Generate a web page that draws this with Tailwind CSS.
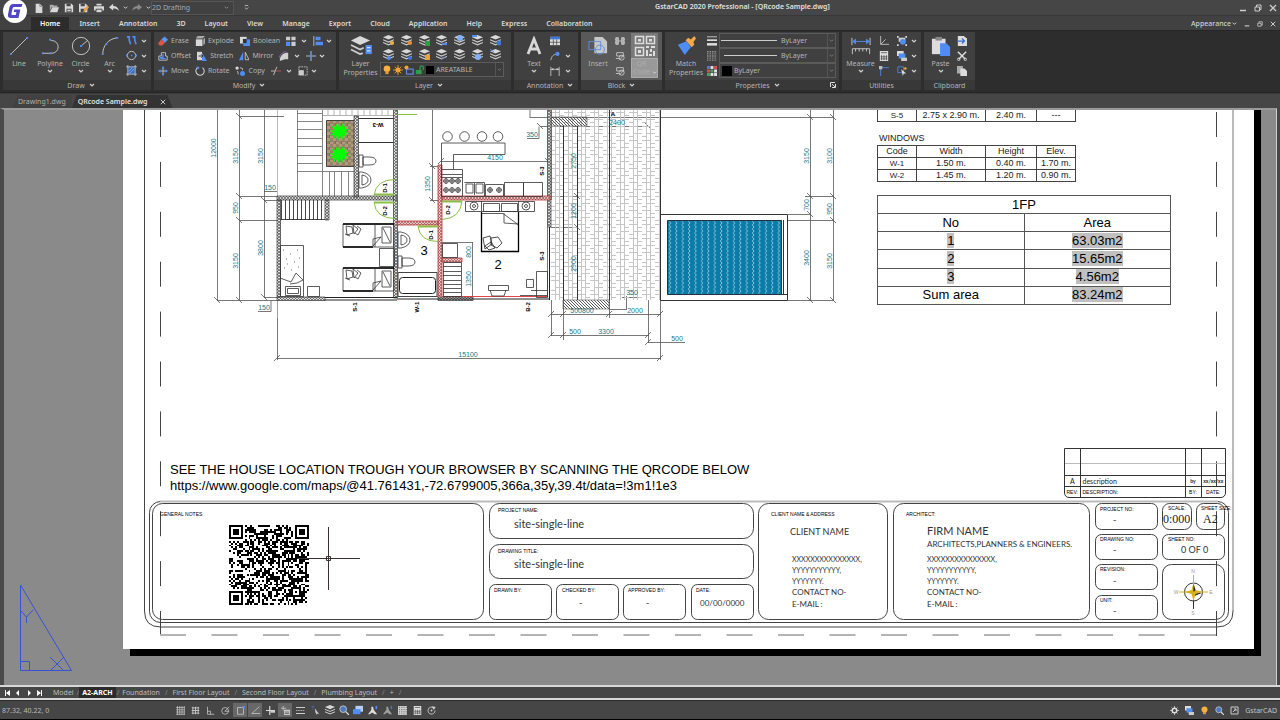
<!DOCTYPE html>
<html lang="en">
<head>
    <meta charset="UTF-8">
    <meta name="viewport" content="width=device-width, initial-scale=1.0">
    <title>GstarCAD 2020 Professional - [QRcode Sample.dwg]</title>
    <script src="https://cdn.jsdelivr.net/npm/@tailwindcss/browser@4"></script>
</head>
<body class="flex h-screen flex-col overflow-hidden bg-[#464646] font-['Noto_Sans',sans-serif] text-[7px] leading-[9px] text-[#c4c4c4]">

    <!-- Icon set -->
    <svg class="hidden">
        <symbol id="chev" viewBox="0 0 6 6"><path d="M1 2l2 2 2-2" fill="none" stroke="#d0d0d0" stroke-width="1.2"/></symbol>
        <symbol id="new" viewBox="0 0 12 12"><path d="M2 1h5l3 3v8H2z" fill="#d8d8d8"/><path d="M7 1v3h3" fill="none" stroke="#777"/></symbol>
        <symbol id="open" viewBox="0 0 12 12"><path d="M1 2h4l1 1h4v2H3l-2 5z" fill="#aaa"/><path d="M4 5h8l-2 6H1z" fill="#d8d8d8"/></symbol>
        <symbol id="save" viewBox="0 0 12 12"><path d="M1 1h8l2 2v8H1z" fill="#d8d8d8"/><path d="M3 1h5v3H3zM3 7h6v4H3z" fill="#464646"/><path d="M4 8h4v2H4z" fill="#d8d8d8"/></symbol>
        <symbol id="saveas" viewBox="0 0 12 12"><path d="M0 1h8l2 2v8H0z" fill="#d8d8d8"/><path d="M2 1h5v3H2zM2 7h5v4H2z" fill="#464646"/><path d="M5 11l1-3.500L10 3l2 2-4 5z" fill="#f0a040"/></symbol>
        <symbol id="print" viewBox="0 0 12 12"><path d="M3 1h6v2H3zM0 4h12v5h-2V7H2v2H0z" fill="#d8d8d8"/><path d="M3 8h6v3H3z" fill="#d8d8d8"/></symbol>
        <symbol id="undo" viewBox="0 0 12 12"><path d="M0 5l5-4v2.500c4 0 6 2 7 6-2-2.500-4-3-7-3V9z" fill="#d8d8d8"/></symbol>
        <symbol id="redo" viewBox="0 0 12 12"><path d="M12 5L7 1v2.500c-4 0-6 2-7 6 2-2.500 4-3 7-3V9z" fill="#8a8a8a"/></symbol>
        <symbol id="more" viewBox="0 0 6 6"><path d="M1 .5h4M1 3l2 2 2-2" fill="none" stroke="#d0d0d0"/></symbol>
        <symbol id="min" viewBox="0 0 8 8"><path d="M1 6.500h6" stroke="#ccc" stroke-width="1.500"/></symbol>
        <symbol id="restore" viewBox="0 0 8 8"><path d="M1 3h4.500v4H1zM2.500 3V1H7v4.500H5.500" fill="none" stroke="#ccc"/></symbol>
        <symbol id="close" viewBox="0 0 8 8"><path d="M1 1l6 6M7 1L1 7" stroke="#ccc" stroke-width="1.300"/></symbol>

        <symbol id="line" viewBox="0 0 22 22"><path d="M2 20L20 2" stroke="#ccc"/><path d="M1 19h2v2H1zM19 1h2v2h-2z" fill="#4d8df5"/></symbol>
        <symbol id="polyline" viewBox="0 0 22 22"><path d="M3 19h10a7 7 0 0 0 0-14l-2-1" fill="none" stroke="#ccc"/><path d="M2 18h2v2H2zM11 18h2v2h-2zM10 3h2v2h-2z" fill="#4d8df5"/></symbol>
        <symbol id="circle" viewBox="0 0 22 22"><circle cx="11" cy="11" r="9.500" fill="none" stroke="#ccc"/><path d="M11 11l7-6" stroke="#ccc"/><path d="M10 10h2v2h-2z" fill="#4d8df5"/></symbol>
        <symbol id="arc" viewBox="0 0 22 22"><path d="M3 20C3 11 9 3 19 2" fill="none" stroke="#ccc"/><path d="M2 19h2v2H2zM6 8h2v2H6zM18 1h2v2h-2z" fill="#4d8df5"/></symbol>
        <symbol id="spline" viewBox="0 0 12 12"><path d="M1 2h2.500v3.500L5 10M7 2h2.500v3.500L11 10" fill="none" stroke="#4d8df5" stroke-width="1.800"/></symbol>
        <symbol id="ellipse" viewBox="0 0 12 12"><circle cx="6" cy="6" r="4.500" fill="none" stroke="#ccc"/><path d="M5.300 5.300h1.500v1.500H5.300zM0 5h2v2H0zM10 5h2v2h-2z" fill="#4d8df5"/></symbol>
        <symbol id="hatch" viewBox="0 0 12 12"><path d="M2 2h8v8H2z" fill="#3a6fc0"/><path d="M2 0v12M10 0v12M0 2h12M0 10h12" stroke="#bbb"/><path d="M3 7l4-4M4 9l5-5" stroke="#9cc0f5" stroke-width=".7"/></symbol>

        <symbol id="erase" viewBox="0 0 12 12"><path d="M4 4l4-3.500 4 4-4 4z" fill="#5b96f2"/><path d="M4 4l4 4.500-3 3H2L0 9z" fill="#e05545"/></symbol>
        <symbol id="explode" viewBox="0 0 12 12"><path d="M1 4h8v8H1z" fill="#d8d8d8"/><path d="M1 3l2-3h9L9 3zM10 4l2-2v7l-2 2z" fill="#aaa"/></symbol>
        <symbol id="boolean" viewBox="0 0 12 12"><path d="M0 1h8v8H0z" fill="#d8d8d8"/><path d="M4 4h8v8H4z" fill="#4d8df5"/><path d="M3.500 3.500h4.500v5H3.500z" fill="#333"/></symbol>
        <symbol id="array" viewBox="0 0 12 12"><path d="M0 1h5v4H0zM6.500 1h5v4h-5zM6.500 7h5v5h-5z" fill="#ccc"/><path d="M0 7h5v5H0z" fill="#4d8df5"/></symbol>
        <symbol id="align" viewBox="0 0 12 12"><path d="M1 0v12" stroke="#ccc"/><path d="M3 1h6v4H3zM3 7h9v4H3z" fill="#4d8df5"/></symbol>
        <symbol id="offset" viewBox="0 0 12 12"><path d="M1 11V6h3V2h5v4h2v5z" fill="none" stroke="#ccc"/><path d="M3 9V7.500h3V4.500h1M3 9h6" fill="none" stroke="#4d8df5" stroke-width="1.500"/></symbol>
        <symbol id="stretch" viewBox="0 0 12 12"><path d="M0 1h6v10H0z" fill="#d8d8d8"/><path d="M6 2l6 10H6z" fill="#4d8df5"/><path d="M2 6h5M5 4l2 2-2 2" stroke="#222" fill="none"/></symbol>
        <symbol id="mirror" viewBox="0 0 12 12"><path d="M5 1v10H0z" fill="#4d8df5"/><path d="M7.500 1.500V10.500H12z" fill="none" stroke="#ccc"/></symbol>
        <symbol id="fillet" viewBox="0 0 12 12"><path d="M1 12C1 5 5 2 11 2v8H7z" fill="#d0d0d0"/><path d="M0 9c1-5 4-8 9-8" fill="none" stroke="#a060c0"/></symbol>
        <symbol id="break" viewBox="0 0 12 12"><path d="M0 6h12M6 0v12" stroke="#ccc"/><path d="M6 0v4M6 8v4" stroke="#4d8df5"/><path d="M4.500 4.500h3v3h-3z" fill="#4d8df5"/></symbol>
        <symbol id="move" viewBox="0 0 12 12"><path d="M6 1v10M1 6h10" stroke="#ccc"/><path d="M6 0l2 3H4zM6 12l2-3H4zM0 6l3-2v4zM12 6L9 4v4z" fill="#4d8df5"/></symbol>
        <symbol id="rotate" viewBox="0 0 12 12"><path d="M4 1.500a5 5 0 1 0 5 .5" fill="none" stroke="#ccc" stroke-width="1.300"/><path d="M1 1h4v3z" fill="#4d8df5"/></symbol>
        <symbol id="copy" viewBox="0 0 12 12"><circle cx="2.500" cy="2.500" r="2" fill="#d8d8d8"/><circle cx="9" cy="9" r="3" fill="#4d8df5"/><path d="M6 2l3 1v2M3 6l1 4" stroke="#ccc" fill="none"/></symbol>
        <symbol id="trim" viewBox="0 0 12 12"><path d="M0 6h5M3 11L7 1" stroke="#ccc"/><path d="M6 6h6" stroke="#d05050"/></symbol>
        <symbol id="scale" viewBox="0 0 12 12"><path d="M1 1h10v10H1z" fill="none" stroke="#ccc" stroke-dasharray="2 1"/><path d="M1 5h6v6H1z" fill="#ccc"/></symbol>

        <symbol id="layers" viewBox="0 0 12 12"><path d="M6 0l6 2.500L6 5 0 2.500z" fill="#d8d8d8"/><path d="M0 5.200l6 2.500 6-2.500M0 8.200l6 2.500 6-2.500" fill="none" stroke="#ccc" stroke-width="1.200"/></symbol>
        <symbol id="layerprops" viewBox="0 0 24 22"><path d="M11 1l11 5-11 5L1 6z" fill="#d8d8d8"/><path d="M1 11l10 5 4-2M1 16l10 5 3-1" fill="none" stroke="#ccc" stroke-width="2"/><path d="M17 11h7v10h-7z" fill="#4d8df5"/><path d="M18.500 14h4M18.500 17.500h4" stroke="#fff"/></symbol>
        <symbol id="bulb" viewBox="0 0 12 12"><circle cx="6" cy="4.500" r="4" fill="#f5b040"/><path d="M4 8h4v3H4z" fill="#e09a30"/></symbol>
        <symbol id="sun" viewBox="0 0 12 12"><circle cx="6" cy="6" r="3" fill="#f5a030"/><path d="M6 0v12M0 6h12M2 2l8 8M10 2l-8 8" stroke="#f5a030"/></symbol>
        <symbol id="vpfreeze" viewBox="0 0 12 12"><path d="M3 5h8v6H3z" fill="none" stroke="#5a85e0" stroke-width="1.500"/><circle cx="3" cy="3" r="2.500" fill="#f5a030"/></symbol>
        <symbol id="lock" viewBox="0 0 12 12"><path d="M1 6h7v5H1z" fill="#2aa045"/><path d="M6 6V3a2 2 0 0 1 4 0v3" fill="none" stroke="#2aa045" stroke-width="1.500"/></symbol>

        <symbol id="tablei" viewBox="0 0 12 12"><path d="M0 1h12v10H0z" fill="#ddd"/><path d="M0 1h12v3H0z" fill="#3a78e0"/><path d="M4 4v7M8 4v7M0 7.500h12" stroke="#555"/></symbol>
        <symbol id="leader" viewBox="0 0 12 12"><path d="M1 11C2 6 4 4 8 4" fill="none" stroke="#ccc"/><circle cx="9" cy="3.500" r="2.500" fill="#4d8df5"/></symbol>
        <symbol id="dim" viewBox="0 0 12 12"><path d="M1 1v11M11 1v11M1 4h10" stroke="#ccc" fill="none"/><path d="M1 4l3-1.500v3zM11 4L8 2.500v3z" fill="#ccc"/></symbol>
        <symbol id="insert" viewBox="0 0 22 22"><path d="M7 1h9l5 5v13H7z" fill="#c8c8c8"/><path d="M1 6h13v9H1z" fill="none" stroke="#5b8ee0"/><circle cx="13" cy="15" r="5" fill="none" stroke="#5b8ee0"/></symbol>
        <symbol id="attr" viewBox="0 0 12 12"><path d="M1 2h3v8H1zM8 2h3v8H8zM4 6h4M0 4h1M0 8h1M11 4h1M11 8h1" fill="#aaa" stroke="#ccc"/></symbol>
        <symbol id="bedit" viewBox="0 0 12 12"><path d="M2 2h8v4H2zM5 9H1" fill="none" stroke="#ccc"/><circle cx="8" cy="8" r="3" fill="none" stroke="#ccc"/><path d="M5 11l6-6" stroke="#ccc"/></symbol>
        <symbol id="qr" viewBox="0 0 22 22"><path d="M1.500 1.500h8v7h-8zM12.500 1.500h8v7h-8zM1.500 12.500h8v8h-8z" fill="none" stroke="#ddd" stroke-width="1.500"/><path d="M4 4h3v2.500H4zM15 4h3v2.500h-3zM4 15h3v3H4zM12 11h3v2h-3zM17 11h4v2h-4zM12 15h2v6h-2zM16 14h2v3h-2zM19 16h2v5h-2zM15 19h3v2h-3z" fill="#ddd"/></symbol>
        <symbol id="brush" viewBox="0 0 22 22"><path d="M1 10l10-4 5 7-7 9z" fill="#4d8df5"/><path d="M10 5l3-3 3 2 4-4 2 3-3 4 1 3-3 3z" fill="#f2a947"/></symbol>
        <symbol id="lweight" viewBox="0 0 12 12"><path d="M0 1h12" stroke="#ddd"/><path d="M0 5h12" stroke="#ddd" stroke-width="2"/><path d="M0 10h12" stroke="#ddd" stroke-width="3"/></symbol>
        <symbol id="ltype" viewBox="0 0 12 12"><path d="M0 1h12M0 6h12" stroke="#ccc" stroke-dasharray="2 1"/><path d="M0 3.500h12M0 8.500h12M0 11h12" stroke="#ccc" stroke-dasharray="1 1"/></symbol>
        <symbol id="colors" viewBox="0 0 12 12"><path d="M0 0h3.500v3.500H0z" fill="#4a7fd0"/><path d="M4.200 0h3.500v3.500H4.200zM8.500 8.500H12V12H8.500z" fill="#ddd"/><path d="M8.500 0H12v3.500H8.500zM0 4.200h3.500v3.500H0z" fill="#d05050"/><path d="M4.200 4.200h3.500v3.500H4.200zM0 8.500h3.500V12H0z" fill="#50a060"/><path d="M8.500 4.200H12v3.500H8.500zM4.200 8.500h3.500V12H4.200z" fill="#e0e0e0"/></symbol>
        <symbol id="measure" viewBox="0 0 22 22"><path d="M1 2v8M21 2v8" stroke="#ccc"/><path d="M2 6h18M2 6l3-2.500v5zM20 6l-3-2.500v5z" stroke="#4d8df5" fill="#4d8df5"/><path d="M1.500 20v-6h19v6M5 14v3M9 14v3M13 14v3M17 14v3" fill="none" stroke="#ccc"/></symbol>
        <symbol id="ucs" viewBox="0 0 12 12"><path d="M2 0v10h10M2 10l6-6" stroke="#ccc" fill="none"/></symbol>
        <symbol id="calc" viewBox="0 0 12 12"><path d="M1 0h10v12H1z" fill="#ddd"/><path d="M2.500 2h7M3 5v6M6 5v6M9 5v6M2 7h8M2 9.500h8" stroke="#555"/></symbol>
        <symbol id="point" viewBox="0 0 12 12"><path d="M2 12V2h10" stroke="#4d8df5" fill="none"/><path d="M0 0h4v4H0z" fill="#bbb"/></symbol>
        <symbol id="group" viewBox="0 0 12 12"><path d="M2 2h8v5H2z" fill="#ccc"/><circle cx="7" cy="7" r="3.500" fill="#4d8df5"/><path d="M0 0h2v2H0zM10 0h2v2h-2zM0 10h2v2H0zM10 10h2v2h-2z" fill="#ddd"/></symbol>
        <symbol id="order" viewBox="0 0 12 12"><path d="M0 0h8v6H0z" fill="#ddd"/><path d="M2 3h8v6H2z" fill="#4d8df5"/><path d="M5 8h7v4H5z" fill="#ccc"/></symbol>
        <symbol id="qselect" viewBox="0 0 12 12"><path d="M1 1h7v7H1z" fill="none" stroke="#4d8df5"/><path d="M5 4l6 5H8l-1 3z" fill="#ddd"/><circle cx="10" cy="3" r="1.500" fill="#f2a947"/></symbol>
        <symbol id="paste" viewBox="0 0 22 22"><path d="M1 3h15v17H1z" fill="#ddd"/><path d="M5 1h7v4H5z" fill="#888"/><path d="M10 8h7l4 4v10H10z" fill="#4d8df5"/></symbol>
        <symbol id="link" viewBox="0 0 12 12"><path d="M1 0h7l4 3v9H1z" fill="#ddd"/><path d="M0 6h9M6 3l3 3-3 3" stroke="#2f6fe0" stroke-width="1.500" fill="none"/></symbol>
        <symbol id="cut" viewBox="0 0 12 12"><path d="M1 1l9 9M11 1l-9 9" stroke="#ddd" stroke-width="1.800"/><circle cx="2" cy="10" r="1.500" fill="none" stroke="#ddd"/><circle cx="10" cy="10" r="1.500" fill="none" stroke="#ddd"/></symbol>
        <symbol id="copyclip" viewBox="0 0 12 12"><path d="M0 0h7v9H0z" fill="#aaa"/><path d="M4 3h5l3 3v6H4z" fill="#ddd"/></symbol>

        <symbol id="grid" viewBox="0 0 12 12"><path d="M2 0v12M5 0v12M8 0v12M11 0v12M0 2h12M0 5h12M0 8h12M0 11h12" stroke="#ccc" stroke-width=".9"/></symbol>
        <symbol id="snap" viewBox="0 0 12 12"><path d="M2.500 1v10M6 1v10M9.500 1v10M1 2.500h10M1 6h10M1 9.500h10" stroke="#ccc" stroke-width="1.200"/></symbol>
        <symbol id="ortho" viewBox="0 0 12 12"><path d="M2 1v10h9M2 7h4v4" fill="none" stroke="#ccc"/></symbol>
        <symbol id="polar" viewBox="0 0 12 12"><circle cx="5.500" cy="6.500" r="4.500" fill="none" stroke="#ccc"/><path d="M5 7h6M5 7l6-6" stroke="#ccc"/></symbol>
        <symbol id="osnap" viewBox="0 0 12 12"><path d="M2 2h8v9H2z" fill="none" stroke="#ccc"/><path d="M9 0h3v3H9z" fill="#4d8df5"/></symbol>
        <symbol id="otrack" viewBox="0 0 12 12"><path d="M11 1L1 10h11" fill="none" stroke="#ccc"/></symbol>
        <symbol id="dyn" viewBox="0 0 12 12"><path d="M5 0v12M0 6h12" stroke="#ddd" stroke-width="1.500"/><path d="M6 6h6v3H6z" fill="#ccc"/></symbol>
        <symbol id="dyninput" viewBox="0 0 12 12"><path d="M3 0v6M0 3h7" stroke="#ccc"/><path d="M4 5h8v7H4z" fill="#ccc"/><path d="M5 8h6M5 10h6" stroke="#555"/></symbol>
        <symbol id="lwt" viewBox="0 0 12 12"><path d="M0 2h12M0 10h12" stroke="#ccc" stroke-width="1.500"/><path d="M0 6h12" stroke="#ccc" stroke-dasharray="2 1"/></symbol>
        <symbol id="cursor" viewBox="0 0 12 12"><path d="M5 3l6 8-3-1 0 2-2-3z" fill="#ccc"/><path d="M1 1h3M2 4h1" stroke="#4d8df5"/></symbol>
        <symbol id="zoomi" viewBox="0 0 12 12"><circle cx="5" cy="5" r="4" fill="#4d78c0" stroke="#ccc"/><path d="M8 8l4 4" stroke="#ddd" stroke-width="1.500"/></symbol>
        <symbol id="viewport" viewBox="0 0 12 12"><path d="M3 1h9v7H3z" fill="#b8cdf0"/><path d="M0 5h9v6H0z" fill="#4d8df5"/></symbol>
        <symbol id="annoscale" viewBox="0 0 12 12"><path d="M4 2h2l1 4 4 5H8L5 9l-3 2H0l4-5z" fill="#ddd"/><path d="M9 1h2v4H9z" fill="#4d8df5"/></symbol>
        <symbol id="checker" viewBox="0 0 12 12"><path d="M0 0h12v12H0z" fill="#ccc"/><path d="M2 1v10M5 1v10M8 1v10M11 1v10" stroke="#555" stroke-dasharray="1.500 1.500"/></symbol>
        <symbol id="cycle" viewBox="0 0 12 12"><path d="M9 2.500A4.700 4.700 0 1 0 10.700 6" fill="none" stroke="#ccc" stroke-width="1.200"/><path d="M4.500 6h3M6 4.500v3M7 1l4 .5-2 3z" stroke="#ccc" fill="#ccc"/></symbol>
        <symbol id="gear" viewBox="0 0 12 12"><circle cx="6" cy="6" r="3" fill="none" stroke="#ddd" stroke-width="2"/><path d="M6 0v3M6 9v3M0 6h3M9 6h3M2 2l2 2M8 8l2 2M10 2L8 4M4 8l-2 2" stroke="#ddd"/></symbol>
    </svg>

    <!-- Title bar -->
    <header class="relative flex h-[15px] shrink-0 items-center pr-[3px] pl-[33px]">
        <svg class="absolute -top-[2px] left-[2px] z-10 size-[26px]" viewBox="0 0 26 26" aria-label="GstarCAD">
            <circle cx="13" cy="13" r="12" fill="#fff"/>
            <path d="M20.500 6H11Q8.500 6 7.500 9L6 16.500q-.6 3.500 3 3.500h7.500l1.800-8.500h-6l-.6 2.500h2.700l-.6 3h-3.600q-1 0-.8-1l1.300-6q.3-1 1.300-1h7.500z" fill="#5046c8"/>
        </svg>
        <div class="flex items-center gap-[3px]">
            <button aria-label="New" class="grid w-3 place-items-center"><svg class="size-[10px]"><use href="#new"/></svg></button>
            <button aria-label="Open" class="grid w-3 place-items-center"><svg class="size-[10px]"><use href="#open"/></svg></button>
            <button aria-label="Save" class="grid w-3 place-items-center"><svg class="size-[10px]"><use href="#save"/></svg></button>
            <button aria-label="Save as" class="grid w-3 place-items-center"><svg class="size-[10px]"><use href="#saveas"/></svg></button>
            <button aria-label="Print" class="grid w-3 place-items-center"><svg class="size-[10px]"><use href="#print"/></svg></button>
            <button aria-label="Undo" class="grid w-3 place-items-center"><svg class="size-[10px]"><use href="#undo"/></svg></button>
            <svg class="size-[5px]"><use href="#chev"/></svg>
            <button aria-label="Redo" class="grid w-3 place-items-center"><svg class="size-[10px]"><use href="#redo"/></svg></button>
            <svg class="size-[5px]"><use href="#chev"/></svg>
        </div>
        <label class="flex h-[14px] w-[83px] items-center justify-between border border-[#555] bg-[#414141] pr-1">
            <select aria-label="Workspace" class="appearance-none text-[#a8a8a8]"><option>2D Drafting</option></select>
            <svg class="size-[5px] opacity-50"><use href="#chev"/></svg>
        </label>
        <svg class="ml-[10px] size-[5px]"><use href="#more"/></svg>
        <h1 class="pointer-events-none absolute left-[58%] top-[2px] -translate-x-1/2 font-semibold whitespace-nowrap text-[#e0e0e0]">GstarCAD 2020 Professional - [QRcode Sample.dwg]</h1>
        <div class="ml-auto flex gap-[7px]">
            <button aria-label="Minimize"><svg class="size-2"><use href="#min"/></svg></button>
            <button aria-label="Restore"><svg class="size-2"><use href="#restore"/></svg></button>
            <button aria-label="Close"><svg class="size-2"><use href="#close"/></svg></button>
        </div>
    </header>

    <!-- Ribbon tabs -->
    <nav class="flex h-[15px] shrink-0 items-end gap-px border-t border-[#383838] bg-[#414141] pr-1 pl-[31px] font-semibold text-[#d8d8d8]">
        <button class="h-[13px] bg-[#2c2c2c] px-[9px] text-white">Home</button>
        <button class="h-[13px] px-[9px]">Insert</button>
        <button class="h-[13px] px-[9px]">Annotation</button>
        <button class="h-[13px] px-[9px]">3D</button>
        <button class="h-[13px] px-[9px]">Layout</button>
        <button class="h-[13px] px-[9px]">View</button>
        <button class="h-[13px] px-[9px]">Manage</button>
        <button class="h-[13px] px-[9px]">Export</button>
        <button class="h-[13px] px-[9px]">Cloud</button>
        <button class="h-[13px] px-[9px]">Application</button>
        <button class="h-[13px] px-[9px]">Help</button>
        <button class="h-[13px] px-[9px]">Express</button>
        <button class="h-[13px] px-[9px]">Collaboration</button>
        <div class="ml-auto flex h-[13px] items-center gap-[7px]">
            <button class="flex items-center gap-px font-medium text-[#d0d0d0]">Appearance<svg class="size-[5px]"><use href="#chev"/></svg></button>
            <button aria-label="Minimize drawing"><svg class="size-[6px]"><use href="#min"/></svg></button>
            <button aria-label="Restore drawing"><svg class="size-[6px]"><use href="#restore"/></svg></button>
            <button aria-label="Close drawing"><svg class="size-[6px]"><use href="#close"/></svg></button>
        </div>
    </nav>

    <!-- Ribbon -->
    <section class="flex h-[63px] shrink-0 gap-[3px] border-y border-[#262626] bg-[#2d2d2d] pt-px pb-[2px] pl-[3px] text-[#b4b4b4]">
        <div class="flex w-[148px] shrink-0 flex-col bg-[#404040]">
            <div class="flex flex-1 pt-px">
                <button class="flex w-[32px] flex-col items-center pt-[3px]"><svg class="size-5"><use href="#line"/></svg><span class="pt-[3px]">Line</span></button>
                <button class="flex w-[30px] flex-col items-center pt-[3px]"><svg class="size-5"><use href="#polyline"/></svg><span class="pt-[3px]">Polyline</span><svg class="size-[6px]"><use href="#chev"/></svg></button>
                <button class="flex w-[31px] flex-col items-center pt-[3px]"><svg class="size-5"><use href="#circle"/></svg><span class="pt-[3px]">Circle</span><svg class="size-[6px]"><use href="#chev"/></svg></button>
                <button class="flex w-[27px] flex-col items-center pt-[3px]"><svg class="size-5"><use href="#arc"/></svg><span class="pt-[3px]">Arc</span><svg class="size-[6px]"><use href="#chev"/></svg></button>
                <div class="flex flex-col pl-[3px]">
                    <button aria-label="Spline" class="flex h-[15px] items-center gap-1"><svg class="size-[11px]"><use href="#spline"/></svg><svg class="size-[6px]"><use href="#chev"/></svg></button>
                    <button aria-label="Ellipse" class="flex h-[15px] items-center gap-1"><svg class="size-[11px]"><use href="#ellipse"/></svg><svg class="size-[6px]"><use href="#chev"/></svg></button>
                    <button aria-label="Hatch" class="flex h-[15px] items-center gap-1"><svg class="size-[11px]"><use href="#hatch"/></svg><svg class="size-[6px]"><use href="#chev"/></svg></button>
                </div>
            </div>
            <div class="flex h-[10px] items-center justify-center gap-1 bg-[#383838] pl-2">Draw<svg class="size-[6px]"><use href="#chev"/></svg></div>
        </div>

        <div class="flex w-[182px] shrink-0 flex-col bg-[#404040]">
            <div class="flex flex-1 flex-col pt-px pl-1">
                <div class="flex h-[15px] items-center gap-[6px]">
                    <button class="flex items-center gap-[3px]"><svg class="size-[10px]"><use href="#erase"/></svg>Erase</button>
                    <button class="flex items-center gap-[3px]"><svg class="size-[10px]"><use href="#explode"/></svg>Explode</button>
                    <button class="flex items-center gap-[3px]"><svg class="size-[10px]"><use href="#boolean"/></svg>Boolean</button>
                    <button aria-label="Array" class="flex items-center gap-[5px]"><svg class="size-[10px]"><use href="#array"/></svg><svg class="size-[6px]"><use href="#chev"/></svg></button>
                    <button aria-label="Align" class="flex items-center gap-[3px]"><svg class="size-[10px]"><use href="#align"/></svg><svg class="size-[6px]"><use href="#chev"/></svg></button>
                </div>
                <div class="flex h-[15px] items-center gap-[6px]">
                    <button class="flex items-center gap-[3px]"><svg class="size-[10px]"><use href="#offset"/></svg>Offset</button>
                    <button class="flex items-center gap-[3px]"><svg class="size-[10px]"><use href="#stretch"/></svg>Stretch</button>
                    <button class="flex items-center gap-[3px]"><svg class="size-[10px]"><use href="#mirror"/></svg>Mirror</button>
                    <button aria-label="Fillet" class="flex items-center gap-[5px]"><svg class="size-[10px]"><use href="#fillet"/></svg><svg class="size-[6px]"><use href="#chev"/></svg></button>
                    <button aria-label="Break" class="flex items-center gap-[3px]"><svg class="size-[10px]"><use href="#break"/></svg><svg class="size-[6px]"><use href="#chev"/></svg></button>
                </div>
                <div class="flex h-[15px] items-center gap-[6px]">
                    <button class="flex items-center gap-[3px]"><svg class="size-[10px]"><use href="#move"/></svg>Move</button>
                    <button class="flex items-center gap-[3px]"><svg class="size-[10px]"><use href="#rotate"/></svg>Rotate</button>
                    <button class="flex items-center gap-[3px]"><svg class="size-[10px]"><use href="#copy"/></svg>Copy</button>
                    <button aria-label="Trim" class="flex items-center gap-[5px]"><svg class="size-[10px]"><use href="#trim"/></svg><svg class="size-[6px]"><use href="#chev"/></svg></button>
                    <button aria-label="Scale" class="flex items-center gap-[3px]"><svg class="size-[10px]"><use href="#scale"/></svg><svg class="size-[6px]"><use href="#chev"/></svg></button>
                </div>
            </div>
            <div class="flex h-[10px] items-center justify-center gap-1 bg-[#383838] pl-2">Modify<svg class="size-[6px]"><use href="#chev"/></svg></div>
        </div>

        <div class="flex w-[172px] shrink-0 flex-col bg-[#404040]">
            <div class="flex flex-1 pt-px">
                <button class="flex w-[41px] flex-col items-center pt-[2px] pl-[2px]"><svg class="h-5 w-[22px]"><use href="#layerprops"/></svg><span class="pt-1">Layer<br>Properties</span></button>
                <div class="flex-1 pr-[7px]">
                    <div class="grid h-[29px] grid-cols-7 place-items-center">
                        <svg class="size-[11px]"><use href="#layers"/><circle cx="9" cy="8" r="2" fill="#f2b040"/></svg>
                        <svg class="size-[11px]"><use href="#layers"/><circle cx="9" cy="8" r="2" fill="#f28a30"/></svg>
                        <svg class="size-[11px]"><use href="#layers"/><path d="M6 6h5v5H6z" fill="#2aa045"/></svg>
                        <svg class="size-[11px]"><use href="#layers"/><path d="M6 9h5" stroke="#4d8df5" stroke-width="2"/></svg>
                        <svg class="size-[11px]"><use href="#layers"/><circle cx="6" cy="3" r="3" fill="#7fb0ff"/></svg>
                        <svg class="size-[11px]"><use href="#layers"/><path d="M0 1h5" stroke="#4d8df5" stroke-width="2"/></svg>
                        <svg class="size-[11px]"><use href="#layers"/><circle cx="9" cy="8" r="2.500" fill="#3a78e0"/></svg>
                        <svg class="size-[11px]"><use href="#layers"/><circle cx="6" cy="9" r="2" fill="#4d8df5"/></svg>
                        <svg class="size-[11px]"><use href="#layers"/><circle cx="9" cy="9" r="2" fill="#3a78e0"/></svg>
                        <svg class="size-[11px]"><use href="#layers"/><path d="M6 6h5v5H6z" fill="#f2a030"/></svg>
                        <svg class="size-[11px]"><use href="#layers"/><path d="M5 9l2 1 3-3" stroke="#6a8ad0" fill="none"/></svg>
                        <svg class="size-[11px]"><use href="#layers"/></svg>
                        <svg class="size-[11px]"><use href="#layers"/><circle cx="6" cy="8" r="3" fill="#7fb0ff"/></svg>
                        <svg class="size-[11px]"><use href="#layers"/><path d="M0 0l4 3" stroke="#4d8df5"/></svg>
                    </div>
                    <label class="flex h-[15px] items-center gap-px border border-[#5c5c5c] bg-[#3c3c3c] pl-px">
                        <svg class="size-[10px]"><use href="#bulb"/></svg>
                        <svg class="size-[10px]"><use href="#sun"/></svg>
                        <svg class="size-[10px]"><use href="#vpfreeze"/></svg>
                        <svg class="size-[10px]"><use href="#lock"/></svg>
                        <span class="size-2 bg-black"></span>
                        <select aria-label="Current layer" class="flex-1 appearance-none pl-px"><option>AREATABLE</option></select>
                        <span class="grid h-full w-2 place-items-center border-l border-[#555]"><svg class="size-[5px] opacity-40"><use href="#chev"/></svg></span>
                    </label>
                </div>
            </div>
            <div class="flex h-[10px] items-center justify-center gap-1 bg-[#383838] pl-2">Layer<svg class="size-[6px]"><use href="#chev"/></svg></div>
        </div>

        <div class="flex w-[64px] shrink-0 flex-col bg-[#404040]">
            <div class="flex flex-1 pt-px">
                <button class="flex w-[36px] flex-col items-center pt-[3px] pl-1"><svg class="size-5" viewBox="0 0 20 20"><path d="M4 18L10 3l6 15M6 13h8" fill="none" stroke="#d8d8d8" stroke-width="2.800"/></svg><span class="pt-[3px]">Text</span><svg class="size-[6px]"><use href="#chev"/></svg></button>
                <div class="flex flex-col">
                    <button aria-label="Table" class="flex h-[15px] items-center"><svg class="size-[10px]"><use href="#tablei"/></svg></button>
                    <button aria-label="Leader" class="flex h-[15px] items-center gap-[5px]"><svg class="size-[10px]"><use href="#leader"/></svg><svg class="size-[6px]"><use href="#chev"/></svg></button>
                    <button aria-label="Dimension" class="flex h-[15px] items-center gap-[5px]"><svg class="size-[10px]"><use href="#dim"/></svg><svg class="size-[6px]"><use href="#chev"/></svg></button>
                </div>
            </div>
            <div class="flex h-[10px] items-center justify-center gap-1 bg-[#383838] pl-2">Annotation<svg class="size-[6px]"><use href="#chev"/></svg></div>
        </div>

        <div class="flex w-[81px] shrink-0 flex-col bg-[#595959]">
            <div class="flex flex-1 pt-px">
                <button class="flex w-[34px] flex-col items-center pt-[3px]"><svg class="size-5"><use href="#insert"/></svg><span class="pt-[3px]">Insert</span></button>
                <div class="flex flex-col">
                    <button aria-label="Attributes" class="flex h-[15px] items-center"><svg class="size-[10px]"><use href="#attr"/></svg></button>
                    <button aria-label="Create block" class="flex h-[15px] items-center"><svg class="size-[10px]"><use href="#bedit"/></svg></button>
                    <button aria-label="Edit block" class="flex h-[15px] items-center"><svg class="size-[10px]"><use href="#bedit"/></svg></button>
                </div>
                <button class="ml-[6px] flex w-[27px] flex-col">
                    <span class="grid h-[25px] w-full place-items-center bg-[#797979]"><svg class="size-[22px]"><use href="#qr"/></svg></span>
                    <span class="flex h-[20px] w-full items-center justify-between border border-[#aaa] bg-[#999] pl-px leading-[8px] text-[#adadad]"><span>QR<br>Code</span><svg class="mt-2 size-[5px]"><use href="#chev"/></svg></span>
                </button>
            </div>
            <div class="flex h-[10px] items-center justify-center gap-1 bg-[#3c3c3c]">Block<svg class="size-[6px]"><use href="#chev"/></svg></div>
        </div>

        <div class="flex w-[174px] shrink-0 flex-col bg-[#404040]">
            <div class="flex flex-1 pt-px">
                <button class="flex w-[42px] flex-col items-center pt-[3px]"><svg class="size-[19px]"><use href="#brush"/></svg><span class="pt-1">Match<br>Properties</span></button>
                <div class="flex w-[12px] flex-col">
                    <span class="flex h-[15px] items-center"><svg class="size-[10px]"><use href="#lweight"/></svg></span>
                    <span class="flex h-[15px] items-center"><svg class="size-[10px]"><use href="#ltype"/></svg></span>
                    <span class="flex h-[15px] items-center"><svg class="size-[10px]"><use href="#colors"/></svg></span>
                </div>
                <div class="flex flex-1 flex-col pr-[3px]">
                    <label class="flex h-[15px] items-center border border-[#5a5a5a] pl-px">
                        <span class="h-px w-[56px] bg-[#ccc]"></span>
                        <select aria-label="Lineweight" class="flex-1 appearance-none pl-1"><option>ByLayer</option></select>
                        <span class="grid h-full w-2 place-items-center border-l border-[#555]"><svg class="size-[5px] opacity-40"><use href="#chev"/></svg></span>
                    </label>
                    <label class="flex h-[15px] items-center border border-[#5a5a5a] pl-1">
                        <span class="h-px w-[53px] bg-[#ccc]"></span>
                        <select aria-label="Linetype" class="flex-1 appearance-none pl-1"><option>ByLayer</option></select>
                        <span class="grid h-full w-2 place-items-center border-l border-[#555]"><svg class="size-[5px] opacity-40"><use href="#chev"/></svg></span>
                    </label>
                    <label class="flex h-[15px] items-center border border-[#5a5a5a] pl-[2px]">
                        <span class="size-[10px] bg-black"></span>
                        <select aria-label="Color" class="flex-1 appearance-none pl-[2px]"><option>ByLayer</option></select>
                        <span class="grid h-full w-2 place-items-center border-l border-[#555]"><svg class="size-[5px] opacity-40"><use href="#chev"/></svg></span>
                    </label>
                </div>
            </div>
            <div class="flex h-[10px] items-center bg-[#383838] pr-[3px] pl-5">
                <span class="flex flex-1 items-center justify-center gap-1">Properties<svg class="size-[6px]"><use href="#chev"/></svg></span>
                <svg class="size-[6px]" viewBox="0 0 6 6"><path d="M.5 5V.5H5M2 2l3 3M5.500 2v3.500H2" fill="none" stroke="#ddd"/></svg>
            </div>
        </div>

        <div class="flex w-[79px] shrink-0 flex-col bg-[#404040]">
            <div class="flex flex-1 pt-px">
                <button class="flex w-[37px] flex-col items-center pt-[3px]"><svg class="size-5"><use href="#measure"/></svg><span class="pt-[3px]">Measure</span><svg class="size-[6px]"><use href="#chev"/></svg></button>
                <div class="flex w-[18px] flex-col">
                    <button aria-label="UCS" class="flex h-[15px] items-center"><svg class="size-[10px]"><use href="#ucs"/></svg></button>
                    <button aria-label="Calculator" class="flex h-[15px] items-center"><svg class="size-[10px]"><use href="#calc"/></svg></button>
                    <button aria-label="Point style" class="flex h-[15px] items-center"><svg class="size-[10px]"><use href="#point"/></svg></button>
                </div>
                <div class="flex flex-col">
                    <button aria-label="Group" class="flex h-[15px] items-center gap-1"><svg class="size-[10px]"><use href="#group"/></svg><svg class="size-[6px]"><use href="#chev"/></svg></button>
                    <button aria-label="Draw order" class="flex h-[15px] items-center gap-1"><svg class="size-[10px]"><use href="#order"/></svg><svg class="size-[6px]"><use href="#chev"/></svg></button>
                    <button aria-label="Quick select" class="flex h-[15px] items-center gap-1"><svg class="size-[10px]"><use href="#qselect"/></svg><svg class="size-[6px]"><use href="#chev"/></svg></button>
                </div>
            </div>
            <div class="flex h-[10px] items-center justify-center bg-[#383838]">Utilities</div>
        </div>

        <div class="flex w-[51px] shrink-0 flex-col bg-[#404040]">
            <div class="flex flex-1 pt-px">
                <button class="flex w-[33px] flex-col items-center pt-[3px]"><svg class="size-5"><use href="#paste"/></svg><span class="pt-[3px]">Paste</span><svg class="size-[6px]"><use href="#chev"/></svg></button>
                <div class="flex flex-col">
                    <button aria-label="Paste link" class="flex h-[15px] items-center"><svg class="size-[10px]"><use href="#link"/></svg></button>
                    <button aria-label="Cut" class="flex h-[15px] items-center"><svg class="size-[10px]"><use href="#cut"/></svg></button>
                    <button aria-label="Copy to clipboard" class="flex h-[15px] items-center"><svg class="size-[10px]"><use href="#copyclip"/></svg></button>
                </div>
            </div>
            <div class="flex h-[10px] items-center justify-center bg-[#383838]">Clipboard</div>
        </div>
    </section>

    <!-- Open drawings -->
    <nav class="flex h-[15px] shrink-0 items-end border-t border-[#3a3a3a] pl-3">
        <button class="h-[13px] bg-[#414141] px-[6px] text-[#b0b0b0] [clip-path:polygon(6px_0,100%_0,100%_100%,0_100%)]">Drawing1.dwg</button>
        <div class="flex h-[13px] items-center gap-3 bg-[#333] pr-[7px] pl-[6px] font-semibold text-[#e0e0e0] [clip-path:polygon(5px_0,calc(100%_-_5px)_0,100%_100%,0_100%)]">
            <button>QRcode Sample.dwg</button>
            <button aria-label="Close tab"><svg class="size-[6px]"><use href="#close"/></svg></button>
        </div>
    </nav>

    <!-- Drawing area -->
    <main class="mr-[3px] min-h-0 flex-1 border-t-2 border-r border-l-4 border-t-[#9a9a9a] border-r-[#d0d0d0] border-l-[#4a4a4a] bg-[#8a8a8a]">
        <svg class="block size-full cursor-crosshair" viewBox="4 110 1272 575" preserveAspectRatio="xMinYMin slice" font-family="Liberation Sans, sans-serif">
            <defs>
                <pattern id="wall" width="3" height="3" patternUnits="userSpaceOnUse"><path d="M0 0h3v3H0z" fill="#ddd"/><path d="M0 0l3 3M3 0L0 3" stroke="#555" stroke-width=".7"/></pattern>
                <pattern id="redwall" width="3" height="3" patternUnits="userSpaceOnUse"><path d="M0 0h3v3H0z" fill="#e8cccc"/><path d="M0 0l3 3M3 0L0 3" stroke="#a05050" stroke-width=".7"/></pattern>
                <pattern id="slash" width="3" height="3" patternUnits="userSpaceOnUse"><path d="M0 0l3 3" stroke="#333" stroke-width=".8"/></pattern>
                <pattern id="paving" width="13" height="14" patternUnits="userSpaceOnUse" x="551" y="112"><path d="M0 .5h8M4 7.500h9M9 3.500h4M0 10.500h4M4.500 0v14M8.500 0v14" stroke="#c6c6c6" fill="none"/></pattern>
                <pattern id="waves" width="6.400" height="8" patternUnits="userSpaceOnUse" x="667" y="221"><path d="M2 0q3 2 0 4q3 2 0 4" stroke="#9fd0e4" stroke-width=".9" fill="none"/></pattern>
                <pattern id="deck" width="6" height="6" patternUnits="userSpaceOnUse"><path d="M0 0h6v6H0z" fill="#b09a78"/><path d="M0 1h3M0 3h3M4 3v3M5.500 3v3" stroke="#6e6050" stroke-width=".8"/></pattern>
                <g id="bed" fill="none" stroke="#333" stroke-width=".8">
                    <path d="M0 0h51v23H0z"/><path d="M0 0h51M0 23h30" stroke="#000" stroke-width="1.300"/>
                    <path d="M32 0v23M39 3h9v16h-9zM30 22l8-9-8 2zM3 2l6 1 1 6-6 2zM10 1l5 4-4 5zM14 2l4 3-3 6-3-2M2 10l5 2M40 4l7 14"/>
                </g>
                <g id="toilet" fill="none" stroke="#333" stroke-width=".8"><path d="M0 0h4v12H0z"/><path d="M4 2h6q7 0 7 4t-7 4H4z"/></g>
                <g id="basin" fill="none" stroke="#333" stroke-width=".8"><path d="M0 0h3q9 2 9 8t-9 8H0z"/><path d="M3 3q6 1 6 5t-6 5z"/></g>
                <g id="hob" fill="none" stroke="#333" stroke-width=".8"><circle r="2.300"/><path d="M-3 0h6M0-3v6"/></g>
                <g id="throw" fill="#fff" stroke="#222" stroke-width=".8"><path d="M0 2l7-2 2 8-7 5zM8 2l7-1 4 6-5 5-6-3zM2 10l6-4 4 6-6 2z"/></g>
            </defs>

            <!-- Paper sheet and its shadow -->
            <path d="M130 100h1131v556H130z" fill="#000"/>
            <path d="M123 100h1131v549H123z" fill="#fff"/>

            <!-- Sheet border -->
            <g fill="none" stroke="#444">
                <path d="M144.500 100v511q0 16 16 16H1217q16 0 16-16V100"/>
                <path d="M1233 100v510" stroke="#bbb" stroke-width="2"/>
                <path d="M160.500 112v524M1216.500 112v524" stroke-dasharray="25 24.900"/>
                <path d="M160 635h1057" stroke="#b4b4b4" stroke-width="2" stroke-dasharray="26 25.500"/>
                <rect x="149.500" y="501.500" width="1079" height="121" rx="11"/>
                <path d="M160 501.500h1058" stroke="#bbb" stroke-width="2"/>
                <rect x="152.500" y="503.500" width="331" height="116" rx="10"/>
                <rect x="489.500" y="503.500" width="264" height="35" rx="10"/>
                <rect x="489.500" y="544.500" width="264" height="34" rx="10"/>
                <rect x="489.500" y="584.500" width="62" height="35" rx="6"/>
                <rect x="556.500" y="584.500" width="62" height="35" rx="6"/>
                <rect x="623.500" y="584.500" width="62" height="35" rx="6"/>
                <rect x="691.500" y="584.500" width="62" height="35" rx="6"/>
                <rect x="758.500" y="503.500" width="129" height="116" rx="10"/>
                <rect x="893.500" y="503.500" width="196" height="116" rx="10"/>
                <rect x="1095.500" y="503.500" width="62" height="26" rx="6"/>
                <rect x="1095.500" y="534.500" width="62" height="25" rx="6"/>
                <rect x="1095.500" y="564.500" width="62" height="25" rx="6"/>
                <rect x="1095.500" y="595.500" width="62" height="24" rx="6"/>
                <rect x="1162.500" y="503.500" width="29" height="26" rx="7"/>
                <rect x="1196.500" y="503.500" width="28" height="26" rx="7"/>
                <rect x="1162.500" y="534.500" width="62" height="25" rx="6"/>
                <rect x="1162.500" y="564.500" width="62" height="55" rx="9"/>
            </g>

            <!-- Title block captions -->
            <g font-family="Liberation Sans Narrow, Liberation Sans, sans-serif" font-size="5" fill="#000">
                <text x="160" y="516">GENERAL NOTES</text>
                <text x="498" y="512">PROJECT NAME:</text>
                <text x="498" y="553">DRAWING TITLE:</text>
                <text x="494" y="592">DRAWN BY:</text>
                <text x="562" y="592">CHECKED BY:</text>
                <text x="628" y="592">APPROVED BY:</text>
                <text x="696" y="592">DATE:</text>
                <text x="771" y="516">CLIENT NAME &amp; ADDRESS</text>
                <text x="906" y="516">ARCHITECT:</text>
                <text x="1100" y="511">PROJECT NO:</text>
                <text x="1100" y="541">DRAWING NO:</text>
                <text x="1100" y="571">REVISION:</text>
                <text x="1100" y="602">UNIT:</text>
                <text x="1168" y="510">SCALE:</text>
                <text x="1201" y="510">SHEET SIZE:</text>
                <text x="1168" y="541">SHEET NO:</text>
            </g>
            <g font-family="Lato, sans-serif" font-size="11" fill="#333">
                <text x="514" y="528">site-single-line</text>
                <text x="514" y="568">site-single-line</text>
                <text x="927" y="535">FIRM NAME</text>
            </g>
            <g font-family="Lato, sans-serif" font-size="9" fill="#333">
                <text x="790" y="535">CLIENT NAME</text>
                <text x="1181" y="553">0 OF 0</text>
                <text x="579" y="606">-</text><text x="646" y="606">-</text>
                <text x="1113" y="523">-</text><text x="1113" y="553">-</text><text x="1113" y="584">-</text><text x="1113" y="614">-</text>
            </g>
            <g font-family="Lato, sans-serif" font-size="8" fill="#333">
                <text x="700" y="606">00/00/0000</text>
                <text x="927" y="547">ARCHITECTS,PLANNERS &amp; ENGINEERS.</text>
                <text x="927" y="595">CONTACT NO-</text>
                <text x="927" y="607">E-MAIL :</text>
                <text x="792" y="595">CONTACT NO-</text>
                <text x="792" y="607">E-MAIL :</text>
            </g>
            <g font-family="Lato, sans-serif" font-size="7" fill="#333">
                <text x="927" y="562">XXXXXXXXXXXXXXX,</text>
                <text x="927" y="573">YYYYYYYYYYY,</text>
                <text x="927" y="584">YYYYYYY.</text>
                <text x="792" y="562">XXXXXXXXXXXXXXX,</text>
                <text x="792" y="573">YYYYYYYYYYY,</text>
                <text x="792" y="584">YYYYYYY.</text>
            </g>
            <g font-family="Liberation Serif, serif" font-size="12" fill="#222">
                <text x="1163" y="523">0:000</text>
                <text x="1203" y="523">A2</text>
            </g>

            <!-- North arrow -->
            <circle cx="1193.500" cy="592" r="9" fill="none" stroke="#333"/>
            <path d="M1193.500 600v9M1193.500 592l7 1-7 3z" stroke="#333" fill="#333"/>
            <path d="M1193.500 575v22M1179 592h29" stroke="#d8b020"/>
            <path d="M1193.500 583l2 7 7 2-7 2-2 7-2-7-7-2 7-2z" fill="#d8b020"/>
            <path d="M1193.500 592V584l2 6z" fill="#222"/>
            <g font-size="5" fill="#999" text-anchor="middle"><text x="1193" y="573">N</text><text x="1193" y="615">S</text><text x="1176" y="594">W</text><text x="1211" y="594">E</text></g>

            <!-- Sheet note -->
            <g font-size="13" fill="#000">
                <text x="170" y="474">SEE THE HOUSE LOCATION TROUGH YOUR BROWSER BY SCANNING THE QRCODE BELOW</text>
                <text x="170" y="490">https://www.google.com/maps/@41.761431,-72.6799005,366a,35y,39.4t/data=!3m1!1e3</text>
            </g>

            <svg x="229" y="525" width="80" height="80" viewBox="0 0 41 41" shape-rendering="crispEdges"><path id="qrcode" fill="#000"/></svg>

            <!-- Crosshair -->
            <path d="M297 558.500h63M328.500 527v63M326.500 556.500h4v4h-4z" fill="none" stroke="#3a3030"/>

            <!-- UCS icon -->
            <path d="M20.500 585v85.500h51zM20.500 661.500h9v9M21 611l5.500 6L33 610M26.500 617v6M50 657l13 13M64 657l-13 13" fill="none" stroke="#3454d4"/>

            <!-- Dimension lines -->
            <g fill="none" stroke="#555" stroke-width=".8">
                <path d="M217.500 110v190.500M239.500 110v190.500M264.500 110v187M277.500 300v60M660.500 110v250"/>
                <path d="M277.500 110v208" stroke="#aaa"/>
                <path d="M239 116.500h45M239 196.500h38M264 200.500h13M239 220.500h42M217 300.500h60M264 297.500h13M258 311.500h13v-11M264 191.500h13"/>
                <path d="M277 358.500h384M551 314.500h110M551 335.500h98M648 342.500h37M551.500 300v36M563.500 126v214M609.500 110v208M648.500 300v43M577.500 126v174"/>
                <path d="M530 117.500h303M540 126.500h109M551 196.500h27M551 227.500h27M609 309.500h18M626.500 296v13M527 138.500h12v-12M622 297.500h17M530 110v8"/>
                <path d="M432.500 110v91M441.500 161.500h107M430 166.500h10M430 200.500h10M472.500 242v55M442 242.500h31"/>
                <path d="M810.500 110v190.500M833.500 110v190.500M805 196.500h29M788 214.500h23M788 220.500h46M788 300.500h46"/>
                <path d="M214 297l6 6M236 113l6 6M236 193l6 6M236 217l6 6M236 297l6 6M261 197l6 6M261 294l6 6M274 361l6-6M657 361l6-6M548 317l6-6M560 317l6-6M606 317l6-6M657 317l6-6M548 338l6-6M560 338l6-6M645 338l6-6M645 345l6-6M574 193l6 6M574 224l6 6M807 114l6 6M830 114l6 6M807 193l6 6M830 193l6 6M807 211l6 6M830 217l6 6M807 297l6 6M830 297l6 6M438 164l6-6M545 158l6 6M429 163l6 6M429 197l6 6M537 123l6 6M645 123l6 6"/>
            </g>

            <!-- Patio paving -->
            <path d="M551 110h109v190H551z" fill="url(#paving)"/>
            <path d="M551 117h36v9h-36zM563 300h46v9h-46z" fill="url(#slash)" stroke="#555" stroke-width=".6"/>
            <path d="M563.500 126v174M609.500 110v190M577.500 126v174M660.500 110v190" stroke="#333"/>

            <!-- Pool -->
            <path d="M660.500 214.500h127v86h-127M783.500 220v74M781 294.500h7" fill="none" stroke="#333"/>
            <path d="M667.500 220.500h114v74h-114z" fill="#0b7ba8" stroke="#234"/>
            <path d="M668 221h112v73H668z" fill="url(#waves)"/>

            <!-- Stairs and planter -->
            <g fill="none" stroke="#777" stroke-width=".9">
                <path d="M297.500 110v86M322.500 110v86M297 113.500h25M297 121.500h25M297 129.500h25M297 138.500h25M297 146.500h25M297 155.500h25M297 163.500h25M297 171.500h57M329.500 171v25M334.500 171v25M341.500 171v25M348.500 171v25"/>
                <path d="M323 115.500h71M328 110v5M334 110v5M340 110v5M346 110v5M352 110v5M358 110v5M364 110v5M370 110v5M376 110v5M382 110v5M388 110v5" stroke="#aaa"/>
                <path d="M281.500 200v20M285.500 200v20M289.500 200v20M293.500 200v20M297.500 200v20M301.500 200v20M305.500 200v20M309.500 200v20M313.500 200v20M317.500 200v20M321.500 200v20M280 219.500h45" stroke="#333"/>
            </g>
            <path d="M326.500 120.500h28v46h-28z" fill="url(#deck)" stroke="#444"/>
            <path id="plant" d="M339 122l1.500 5 2.500-4 .5 4 4-1-3 3.500 5-.5-4 2.500 4 2-5-.5 2.500 4-4-2-.5 5-2.500-4-2 5-1-5-4 3.500 1.500-4.500-5 .5 4-3-4-2 5-.5-3-4.500 4.500 2-.5-4 3 3z" fill="#0f0"/>
            <use href="#plant" y="23"/>

            <!-- Walls -->
            <g fill="url(#wall)" stroke="#333" stroke-width=".7">
                <path d="M354 116h4.500v81H354zM277 196h120v4H277zM277 200h3.500v97H277zM325 200h4v20h-4zM277 297h48v3.500h-48zM393.500 110h4v188h-4zM547.500 110h3.500v117h-3.500zM438 297h35v3.500h-35z"/>
            </g>
            <g fill="url(#redwall)" stroke="#b33" stroke-width=".8">
                <path d="M438 165h4v131h-4zM442 196h108v4H442zM397 221h41v4h-41zM442 258h20v4h-20z"/>
            </g>
            <path d="M397.500 110v188M547.500 200v97M551.500 110v90M442 296.500h106M397 296.500h41" stroke="#d33" fill="none" stroke-width=".9"/>
            <path d="M325 297.500h72M325 300h72M397 299h153M549.500 227v73" stroke="#222" fill="none"/>

            <!-- Doors -->
            <g fill="none" stroke="#8abf45">
                <path d="M374 195.500q2-16 21-16M374 202.500q2 16 21 16M462 201.500q-2 17-20 18M418 226.500q2 15 20 15M397 114.500h20"/>
                <path d="M374 194.500h20M374 202.500h20M442 201.500h20M418 226.500h20" stroke-width="2"/>
            </g>

            <!-- Fixtures -->
            <path d="M358.500 118.500h35M358.500 142.500h35" stroke="#333"/>
            <use href="#toilet" x="359" y="155"/>
            <use href="#basin" x="359" y="172"/>
            <use href="#basin" x="398" y="232"/>
            <use href="#toilet" x="398" y="256"/>
            <path d="M398 272.500h39v24h-39z" fill="none" stroke="#444"/>
            <rect x="399.500" y="277.500" width="36" height="16" rx="3" fill="#fff" stroke="#222"/>
            <use href="#bed" x="343" y="224"/>
            <use href="#bed" x="343" y="268"/>
            <g fill="none" stroke="#333" stroke-width=".8">
                <path d="M379.500 248.500h15v18h-15zM280.500 245.500h23v51h-23zM285.500 286.500h15v9h-15zM287.500 288.500h11v5h-11zM280 278l11 4 5-9 7 7-6 3-7 1M307.500 286.500h12v10h-12z"/>
                <path d="M283 250h1M290 254h1M297 250h1M286 259h1M294 262h1M299 258h1M284 268h1M291 270h1M298 267h1M287 264h1" stroke="#555"/>
                <circle cx="447.500" cy="136.500" r="4.800"/><circle cx="464.500" cy="136.500" r="4.800"/><circle cx="482" cy="136.500" r="4.800"/><circle cx="498" cy="136.500" r="4.800"/>
                <path d="M441.500 170v-27H505v11.500h-51.500V169M441.500 169.500h21v27h-21zM441 174.500h21M441 177.500h21M464.500 182.500h20v14h-20M474.500 183v12M466 184h7v9h-7zM476 184h7v9h-7zM485.500 184.500h18v12h-18zM504.500 182.500h19v14h-19zM523.500 182.500h19v14h-19z"/>
                <use href="#hob" x="446" y="181"/><use href="#hob" x="452" y="181"/><use href="#hob" x="458" y="181"/><use href="#hob" x="446" y="190"/><use href="#hob" x="452" y="190"/><use href="#hob" x="458" y="190"/><use href="#hob" x="490" y="190"/><use href="#hob" x="499" y="190"/>
                <path d="M465.500 201.500h69v10h-69zM481.500 201v10M518.500 201v10M483.500 203.500h16v8h-16zM501.500 203.500h16v8h-16zM481 213.500h22l15 11M504 213v10l14 1"/>
                <path d="M481.500 212v39.500h37V212" stroke="#000" stroke-width="1.300"/>
                <circle cx="474" cy="206" r="4"/><circle cx="526" cy="206" r="4"/><circle cx="474" cy="206" r="1.500"/><circle cx="526" cy="206" r="1.500"/>
                <path d="M442.500 243.500h15v14h-15zM443.500 262.500h18v34h-18zM443 266.500h18M443 271.500h18M443 275.500h18M443 280.500h18M443 284.500h18M443 288.500h18M443 292.500h18"/>
                <path d="M488.500 285.500h20v5h-20zM490 290l2 6h12l2-6M526.500 279.500h7v8h-7zM536.500 271.500h11v26h-11zM531 290.500h16M520 295.500h27"/>
            </g>
            <use href="#throw" x="483" y="236"/>

            <!-- Dimension values -->
            <g font-size="7" fill="#17788c" text-anchor="middle">
                <text transform="translate(216 148) rotate(-90)">12000</text>
                <text transform="translate(238 156) rotate(-90)">3150</text>
                <text transform="translate(263 156) rotate(-90)">3150</text>
                <text x="270" y="190">150</text>
                <text transform="translate(238 208) rotate(-90)">950</text>
                <text transform="translate(238 261) rotate(-90)">3150</text>
                <text transform="translate(263 248) rotate(-90)">3800</text>
                <text x="264" y="310">150</text>
                <text x="468" y="357">15100</text>
                <text x="495" y="160">4150</text>
                <text transform="translate(430 184) rotate(-90)">1350</text>
                <text transform="translate(471 252) rotate(-90)">800</text>
                <text transform="translate(471 279) rotate(-90)">1350</text>
                <text x="532" y="137">350</text>
                <text x="617" y="125">2400</text>
                <text transform="translate(576 161) rotate(-90)">2750</text>
                <text transform="translate(576 211) rotate(-90)">1200</text>
                <text transform="translate(576 264) rotate(-90)">2900</text>
                <text x="632" y="295">350</text>
                <text x="582" y="313">500800</text>
                <text x="635" y="313">2000</text>
                <text x="575" y="334">500</text>
                <text x="606" y="334">3300</text>
                <text x="677" y="341">500</text>
                <text transform="translate(809 156) rotate(-90)">3150</text>
                <text transform="translate(809 205) rotate(-90)">700</text>
                <text transform="translate(809 258) rotate(-90)">3400</text>
                <text transform="translate(832 156) rotate(-90)">3100</text>
                <text transform="translate(832 209) rotate(-90)">950</text>
                <text transform="translate(832 261) rotate(-90)">3150</text>
            </g>
            <g font-size="6" font-weight="bold" fill="#000" text-anchor="middle">
                <text transform="translate(378 123) rotate(180)">W-3</text>
                <text transform="translate(387 188) rotate(-90)">D-1</text>
                <text transform="translate(387 211) rotate(-90)">D-2</text>
                <text transform="translate(433 235) rotate(-90)">D-1</text>
                <text transform="translate(450 210) rotate(-90)">D-2</text>
                <text transform="translate(357 307) rotate(-90)">S-1</text>
                <text transform="translate(419 307) rotate(-90)">W-1</text>
                <text transform="translate(530 307) rotate(-90)">B-2</text>
                <text transform="translate(544 171) rotate(-90)">S-3</text>
                <text transform="translate(544 256) rotate(-90)">S-3</text>
                <text x="613" y="116">A</text>
            </g>
            <g font-size="13" fill="#000" text-anchor="middle"><text x="424" y="255">3</text><text x="498" y="269">2</text></g>

            <!-- Schedules -->
            <foreignObject x="877" y="109" width="199" height="13">
                <table class="h-[13px] w-full table-fixed border-collapse text-center font-['Liberation_Sans',sans-serif] text-[9px] leading-[11px] text-[#222]">
                    <colgroup><col class="w-[39px]"><col class="w-[69px]"><col class="w-[51px]"><col></colgroup>
                    <tr><td class="border border-[#444] text-[8px]">S-5</td><td class="border border-[#444]">2.75 x 2.90 m.</td><td class="border border-[#444]">2.40 m.</td><td class="border border-[#444]">---</td></tr>
                </table>
            </foreignObject>
            <foreignObject x="877" y="133" width="199" height="50">
                <table class="w-full table-fixed border-collapse text-center font-['Liberation_Sans',sans-serif] text-[9px] leading-[11px] text-[#222]">
                    <caption class="h-3 pl-[2px] text-left">WINDOWS</caption>
                    <colgroup><col class="w-[39px]"><col class="w-[69px]"><col class="w-[51px]"><col></colgroup>
                    <tr><th class="border border-[#444] font-normal">Code</th><th class="border border-[#444] font-normal">Width</th><th class="border border-[#444] font-normal">Height</th><th class="border border-[#444] font-normal">Elev.</th></tr>
                    <tr><td class="border border-[#444] text-[8px]">W-1</td><td class="border border-[#444]">1.50 m.</td><td class="border border-[#444]">0.40 m.</td><td class="border border-[#444]">1.70 m.</td></tr>
                    <tr><td class="border border-[#444] text-[8px]">W-2</td><td class="border border-[#444]">1.45 m.</td><td class="border border-[#444]">1.20 m.</td><td class="border border-[#444]">0.90 m.</td></tr>
                </table>
            </foreignObject>
            <foreignObject x="877" y="195" width="294" height="111">
                <table class="h-[110px] w-full table-fixed border-collapse text-center font-['Liberation_Sans',sans-serif] text-[13px] leading-[14px] text-black">
                    <tr><th colspan="2" class="border border-[#555] p-0 font-normal">1FP</th></tr>
                    <tr><th class="border border-[#555] p-0 font-normal">No</th><th class="border border-[#555] p-0 font-normal">Area</th></tr>
                    <tr><td class="border border-[#555] p-0"><span class="bg-[#c0c0c0]">1</span></td><td class="border border-[#555] p-0"><span class="bg-[#c0c0c0]">63.03m2</span></td></tr>
                    <tr><td class="border border-[#555] p-0"><span class="bg-[#c0c0c0]">2</span></td><td class="border border-[#555] p-0"><span class="bg-[#c0c0c0]">15.65m2</span></td></tr>
                    <tr><td class="border border-[#555] p-0"><span class="bg-[#c0c0c0]">3</span></td><td class="border border-[#555] p-0"><span class="bg-[#c0c0c0]">4.56m2</span></td></tr>
                    <tr><td class="border border-[#555] p-0">Sum area</td><td class="border border-[#555] p-0"><span class="bg-[#c0c0c0]">83.24m2</span></td></tr>
                </table>
            </foreignObject>

            <!-- Revision table -->
            <foreignObject x="1064" y="448" width="163" height="50">
                <div class="w-[162px] overflow-hidden rounded-b-[5px] border border-[#333]">
                    <table class="w-full table-fixed border-collapse text-center font-['Lato',sans-serif] text-[7px] leading-[10px] text-[#222]">
                        <colgroup><col class="w-[15px]"><col><col class="w-[16px]"><col class="w-[24px]"></colgroup>
                        <tr class="h-[14px] border-b border-[#bbb]"><td></td><td class="border-x border-[#333]"></td><td class="border-r border-[#333]"></td><td></td></tr>
                        <tr class="h-[12px] border-b border-[#333]"><td></td><td class="border-x border-[#333]"></td><td class="border-r border-[#333]"></td><td></td></tr>
                        <tr class="border-b border-[#333]"><td class="p-0">A</td><td class="border-x border-[#333] p-0 pl-[2px] text-left">description</td><td class="border-r border-[#333] p-0 text-[5px] font-bold">by</td><td class="p-0 text-[5px] font-bold">xx/xx/xx</td></tr>
                        <tr class="font-['Liberation_Sans_Narrow','Liberation_Sans',sans-serif] text-[5px] text-black"><td class="p-0">REV:</td><td class="border-x border-[#333] p-0 pl-[2px] text-left">DESCRIPTION:</td><td class="border-r border-[#333] p-0">BY:</td><td class="p-0">DATE:</td></tr>
                    </table>
                </div>
            </foreignObject>
        </svg>
    </main>

    <!-- Layout tabs -->
    <nav class="flex h-[15px] shrink-0 items-center border-y-2 border-[#d8d8d8] bg-[#464646] pl-1 text-[#bdbdbd]">
        <div class="flex w-[46px] items-center gap-[5px]">
            <button aria-label="First"><svg class="size-[6px]" viewBox="0 0 6 6"><path d="M1 0h1v6H1zM6 0v6L2 3z" fill="#fff"/></svg></button>
            <button aria-label="Previous"><svg class="size-[6px]" viewBox="0 0 6 6"><path d="M4 0v6L1 3z" fill="#fff"/></svg></button>
            <button aria-label="Next"><svg class="size-[6px]" viewBox="0 0 6 6"><path d="M2 0v6l3-3z" fill="#fff"/></svg></button>
            <button aria-label="Last"><svg class="size-[6px]" viewBox="0 0 6 6"><path d="M0 0v6l4-3zM4 0h1v6H4z" fill="#fff"/></svg></button>
        </div>
        <button class="px-[3px]">Model</button><span class="text-[#888]">/</span>
        <button class="h-full bg-[#2a2a2a] px-[3px] font-bold text-white">A2-ARCH</button><span class="pl-px text-[#888]">/</span>
        <button class="px-[3px]">Foundation</button><span class="px-[2px] text-[#888]">/</span>
        <button class="px-[3px]">First Floor Layout</button><span class="px-[2px] text-[#888]">/</span>
        <button class="px-[3px]">Second Floor Layout</button><span class="px-[2px] text-[#888]">/</span>
        <button class="px-[3px]">Plumbing Layout</button><span class="px-[2px] text-[#888]">/</span>
        <button aria-label="New layout" class="px-[3px]">+</button><span class="px-[2px] text-[#888]">/</span>
    </nav>

    <!-- Status bar -->
    <footer class="flex h-[20px] shrink-0 items-center border-t border-b border-t-[#2c2c2c] border-b-black bg-[#464646] pr-[3px] pl-[2px]">
        <output class="w-[171px] text-[#b8b8b8]">87.32, 40.22, 0</output>
        <div class="flex items-center gap-px">
            <button aria-label="Grid" class="grid size-[14px] place-items-center"><svg class="size-[9px]"><use href="#grid"/></svg></button>
            <button aria-label="Snap" class="grid size-[14px] place-items-center"><svg class="size-[9px]"><use href="#snap"/></svg></button>
            <button aria-label="Ortho" class="grid size-[14px] place-items-center"><svg class="size-[9px]"><use href="#ortho"/></svg></button>
            <button aria-label="Polar" class="grid size-[14px] place-items-center"><svg class="size-[9px]"><use href="#polar"/></svg></button>
            <button aria-label="Object snap" class="grid size-[14px] place-items-center bg-[#686868]"><svg class="size-[9px]"><use href="#osnap"/></svg></button>
            <button aria-label="Object tracking" class="grid size-[14px] place-items-center bg-[#686868]"><svg class="size-[9px]"><use href="#otrack"/></svg></button>
            <button aria-label="Dynamic UCS" class="grid size-[14px] place-items-center"><svg class="size-[9px]"><use href="#dyn"/></svg></button>
            <button aria-label="Dynamic input" class="grid size-[14px] place-items-center bg-[#686868]"><svg class="size-[9px]"><use href="#dyninput"/></svg></button>
            <button aria-label="Lineweight" class="grid size-[14px] place-items-center"><svg class="size-[9px]"><use href="#lwt"/></svg></button>
            <button aria-label="Selection" class="grid size-[14px] place-items-center"><svg class="size-[9px]"><use href="#cursor"/></svg></button>
            <button aria-label="Layers" class="grid w-[13px] place-items-center"><svg class="size-[10px]"><use href="#layers"/></svg></button>
            <button aria-label="Zoom" class="grid w-[13px] place-items-center"><svg class="size-[10px]"><use href="#zoomi"/></svg></button>
            <button aria-label="Viewports" class="grid size-[14px] place-items-center"><svg class="size-[10px]"><use href="#viewport"/></svg></button>
            <button aria-label="Annotation scale" class="grid size-[14px] place-items-center"><svg class="size-[10px]"><use href="#annoscale"/></svg></button>
            <button aria-label="Auto scale" class="grid w-[13px] place-items-center"><svg class="size-[10px] opacity-60"><use href="#annoscale"/></svg></button>
            <button aria-label="Transparency" class="grid size-[14px] place-items-center"><svg class="size-[9px]"><use href="#checker"/></svg></button>
            <button aria-label="Properties" class="grid size-[14px] place-items-center"><svg class="size-[9px]"><use href="#calc"/></svg></button>
            <button aria-label="Cycle" class="grid w-[13px] place-items-center"><svg class="size-[9px]"><use href="#cycle"/></svg></button>
        </div>
        <div class="ml-auto flex items-center gap-[6px]">
            <button aria-label="Settings"><svg class="size-[9px]"><use href="#gear"/></svg></button>
            <button aria-label="Lock"><svg class="size-[9px]"><use href="#order"/></svg></button>
            <button aria-label="Hints"><svg class="size-[9px]"><use href="#bulb"/></svg></button>
            <button aria-label="Isolate"><svg class="size-[9px]"><use href="#zoomi"/></svg></button>
            <button aria-label="Clean screen"><svg class="size-[9px]" viewBox="0 0 9 9"><path d="M1 1h7v7H1zM3 6l3-3M4 3h2v2" fill="none" stroke="#ccc"/></svg></button>
            <span>GstarCAD</span>
        </div>
    </footer>

    <script>
        // Fills the QR symbol: three finder squares, one alignment square, data modules elsewhere
        const size = 41;
        let seed = 77;
        let d = "";

        function ring(x, y, cx, cy, r) {
            const k = Math.max(Math.abs(x - cx), Math.abs(y - cy));
            return k <= r ? k : -1;
        }

        for (let y = 0; y < size; y++) {
            for (let x = 0; x < size; x++) {
                seed = (seed * 1103515245 + 12345) % 2147483648;
                let on = seed / 2147483648 < 0.52;
                for (const [cx, cy] of [[3, 3], [size - 4, 3], [3, size - 4]]) {
                    const k = ring(x, y, cx, cy, 4);
                    if (k >= 0) on = k < 2 || k === 3;
                }
                const a = ring(x, y, size - 7, size - 7, 2);
                if (a >= 0) on = a !== 1;
                if (on) d += `M${x} ${y}h1v1h-1z`;
            }
        }
        document.getElementById("qrcode").setAttribute("d", d);
    </script>
</body>
</html>
